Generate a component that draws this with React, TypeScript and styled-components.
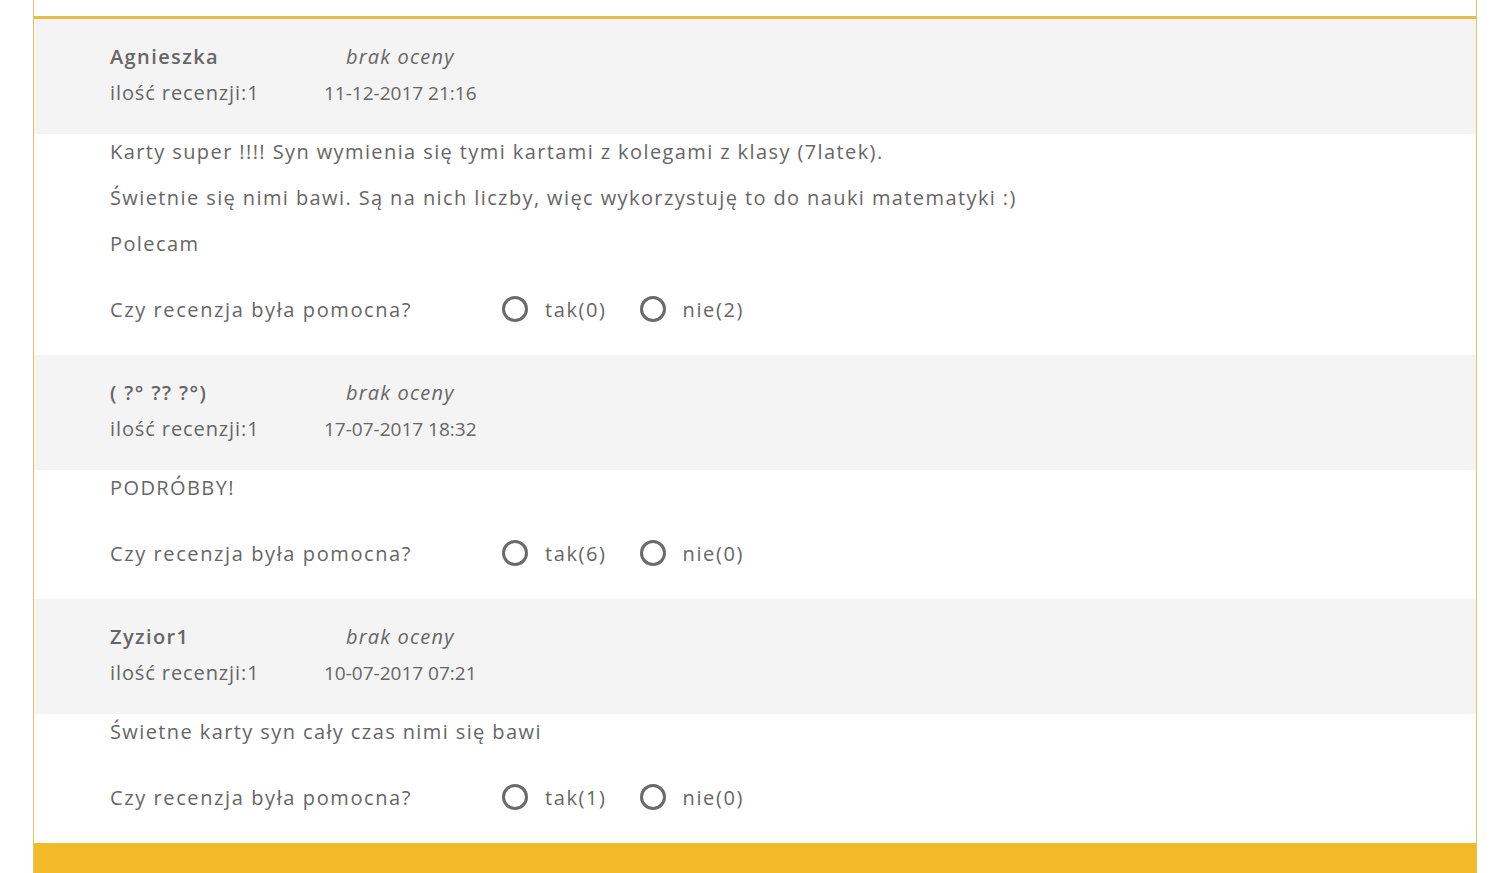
import styled, { createGlobalStyle } from 'styled-components'

const GlobalStyle = createGlobalStyle`
    html, body {
        margin: 0;
        padding: 0;
        background: #ffffff;
        overflow: hidden;
    }
    body {
        font-family: 'Open Sans', 'Noto Sans', Arial, sans-serif;
        color: #666666;
    }
`

type Review = {
    author: string
    count: number
    date: string
    text: string[]
    yes: number
    no: number
}

const reviews: Review[] = [
    {
        author: 'Agnieszka',
        count: 1,
        date: '11-12-2017 21:16',
        text: [
            'Karty super !!!! Syn wymienia się tymi kartami z kolegami z klasy (7latek).',
            'Świetnie się nimi bawi. Są na nich liczby, więc wykorzystuję to do nauki matematyki :)',
            'Polecam',
        ],
        yes: 0,
        no: 2,
    },
    {
        author: '( ?° ?? ?°)',
        count: 1,
        date: '17-07-2017 18:32',
        text: ['PODRÓBBY!'],
        yes: 6,
        no: 0,
    },
    {
        author: 'Zyzior1',
        count: 1,
        date: '10-07-2017 07:21',
        text: ['Świetne karty syn cały czas nimi się bawi'],
        yes: 1,
        no: 0,
    },
]

const App = () => {
    return (
        <>
            <GlobalStyle />
            <Ramka>
                <Lista>
                    {reviews.map((r, index) => (
                        <Recenzja key={index}>
                            <Naglowek>
                                <Kolumna>
                                    <Autor>{r.author}</Autor>
                                    <Info>ilość recenzji:{r.count}</Info>
                                </Kolumna>
                                <KolumnaData>
                                    <Ocena>brak oceny</Ocena>
                                    <Data>{r.date}</Data>
                                </KolumnaData>
                            </Naglowek>
                            <Tresc>
                                {r.text.map((t, i) => (
                                    <Akapit key={i}>{t}</Akapit>
                                ))}
                                <Pomocna>
                                    <Pytanie>Czy recenzja była pomocna?</Pytanie>
                                    <Opcja>
                                        <Radio type='radio' name={'pomoc' + index} />
                                        tak({r.yes})
                                    </Opcja>
                                    <Opcja>
                                        <Radio type='radio' name={'pomoc' + index} />
                                        nie({r.no})
                                    </Opcja>
                                </Pomocna>
                            </Tresc>
                        </Recenzja>
                    ))}
                </Lista>
                <Stopka />
            </Ramka>
        </>
    )
}

export default App

const Ramka = styled.div`
    margin-left: 33px;
    width: 1444px;
    box-sizing: border-box;
    border-left: 1px solid #e2c35c;
    border-right: 1px solid #e2c35c;
    padding-top: 16px;
`

const Lista = styled.div`
    border-top: 3px solid #e6bd45;
`

const Recenzja = styled.div``

const Naglowek = styled.div`
    background: #f4f4f4;
    display: flex;
    padding: 20px 0 23px 76px;
`

const Kolumna = styled.div`
    display: flex;
    flex-direction: column;
    width: 214px;
`

const KolumnaData = styled(Kolumna)`
    width: auto;
    align-items: center;
`

const Autor = styled.div`
    font-size: 20px;
    font-weight: 600;
    line-height: 36px;
    letter-spacing: 1.4px;
`

const Info = styled.div`
    font-size: 20px;
    line-height: 36px;
    letter-spacing: 0.9px;
`

const Data = styled.div`
    font-size: 19px;
    line-height: 36px;
    letter-spacing: 0;
`

const Ocena = styled.div`
    font-size: 20px;
    font-style: italic;
    line-height: 36px;
    letter-spacing: 1.2px;
`

const Tresc = styled.div`
    padding: 4px 0 26px 76px;
`

const Akapit = styled.p`
    margin: 0 0 18px 0;
    font-size: 20px;
    line-height: 28px;
    letter-spacing: 1.4px;
`

const Pomocna = styled.div`
    display: flex;
    align-items: center;
    height: 40px;
    margin-top: 31px;
    font-size: 20px;
    letter-spacing: 1.6px;
`

const Pytanie = styled.div`
    width: 392px;
`

const Opcja = styled.label`
    display: flex;
    align-items: center;
    gap: 17px;
    margin-right: 33px;
    cursor: pointer;
`

const Radio = styled.input`
    appearance: none;
    margin: 0;
    width: 26px;
    height: 26px;
    border: 3px solid #6a6a6a;
    border-radius: 50%;
    box-sizing: border-box;
    background: #ffffff;
`

const Stopka = styled.div`
    height: 40px;
    background: #f2ba29;
`
